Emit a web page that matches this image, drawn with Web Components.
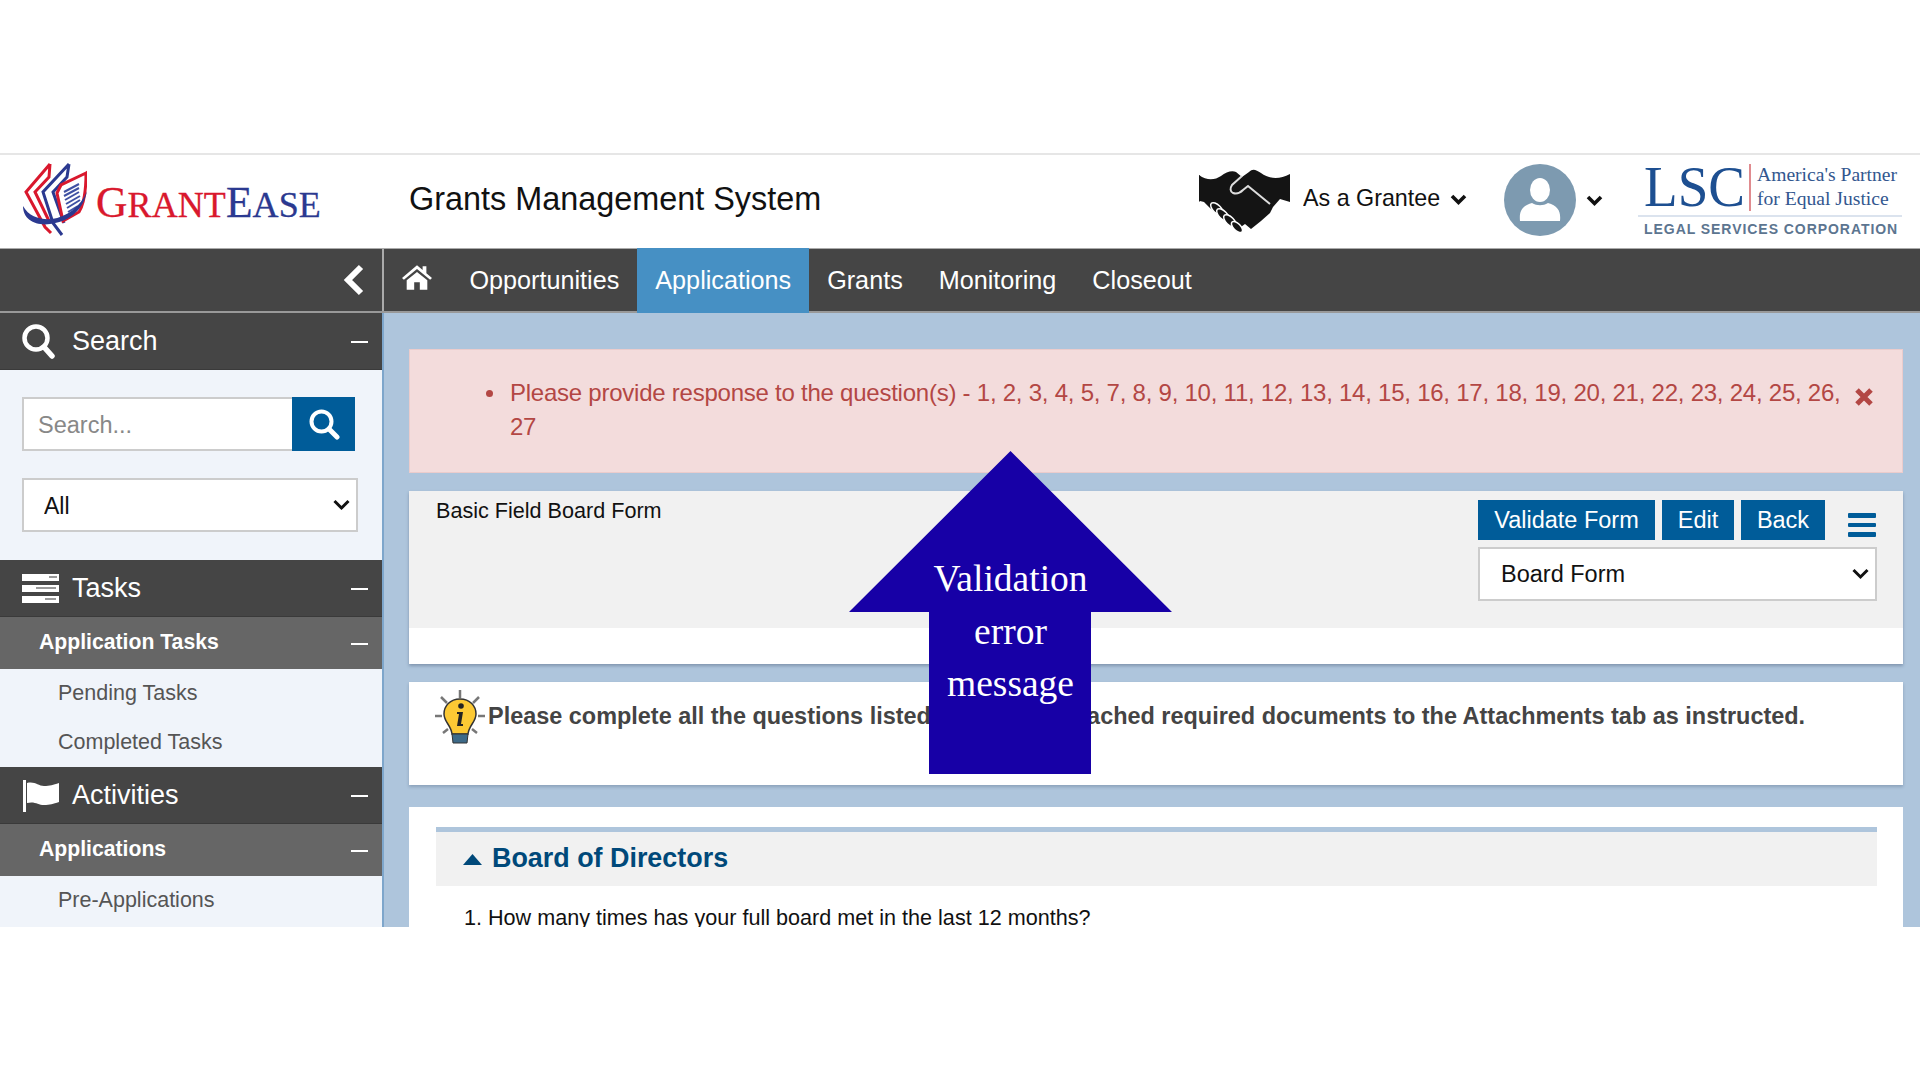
<!DOCTYPE html>
<html><head><meta charset="utf-8">
<style>
html,body{margin:0;padding:0;background:#fff;font-family:"Liberation Sans",Arial,sans-serif;}
body{width:1920px;height:1080px;overflow:hidden;position:relative;}
</style></head>
<body>
<ge-app></ge-app>
<script>
function el(name, css, html){
  customElements.define(name, class extends HTMLElement{
    constructor(){super();const s=this.attachShadow({mode:'open'});
      s.innerHTML='<style>'+css+'</style>'+html;}
  });
}
const chev='<svg width="17" height="12" viewBox="0 0 17 12"><path d="M2 2l6.500 6.500L15 2" fill="none" stroke="#111" stroke-width="3.600"/></svg>';

customElements.define('ge-select', class extends HTMLElement{
  constructor(){super();const s=this.attachShadow({mode:'open'});
    s.innerHTML=`<style>:host{display:block;position:relative;height:54px}
    select{appearance:none;-webkit-appearance:none;display:block;width:100%;height:54px;box-sizing:border-box;border:2px solid #ccc;background:#fff;font:var(--fs,23px) "Liberation Sans",sans-serif;padding-left:var(--pl,21px);padding-top:var(--pt,0);color:#111;border-radius:0;outline:0}
    svg{position:absolute;right:8px;top:21px;pointer-events:none}</style>
    <select><option></option></select><svg width="17" height="12" viewBox="0 0 17 12"><path d="M1.500 2l7 7 7-7" fill="none" stroke="#111" stroke-width="3"/></svg>`;}
  connectedCallback(){this.shadowRoot.querySelector('option').textContent=this.getAttribute('label');}
});

el('ge-grant-logo',`:host{display:flex;align-items:flex-start;width:320px;height:74px}
 svg{flex:none}
 .t{margin:17px 0 0 9px;font-family:"Liberation Serif",serif;white-space:nowrap;line-height:44px;font-size:36px;letter-spacing:.1px;-webkit-text-stroke:.3px currentColor}
 .r{color:#d9182d}.b{color:#2b3990}.big{font-size:43.500px}`,
`<svg width="65" height="74" viewBox="0 0 65 74">
 <path d="M28 1L4 29l19 35 6 6M28 1l-1 13-14 15 15 31" fill="none" stroke="#d9182d" stroke-width="3"/>
 <path d="M47 1L21 29l10 31 9 12M47 1l-2 13-14 15 11 31" fill="none" stroke="#2b3990" stroke-width="3"/>
 <path d="M64 10L39 22l-4 8 6 28 16-9c5-8 7-24 7-39z" fill="#fff" stroke="#d9182d" stroke-width="3"/>
 <path d="M42 29l15-8M42 33l15-8M43 37l14-8M44 41l14-8M45 45l13-8M46 49l10-6" stroke="#3f51a3" stroke-width="2"/>
 <path d="M1 43c0 14 13 20 27 18 17-2 33-12 37-33-6 16-21 26-35 28-11 1-23-2-29-13z" fill="#2b3990"/>
</svg><div class="t"><span class="r"><span class="big">G</span>RANT</span><span class="b"><span class="big">E</span>ASE</span></div>`);

el('ge-lsc-logo',`:host{display:block;width:264px;height:84px;font-family:"Liberation Serif",serif;color:#1d4f91}
 .top{display:flex;height:54px;border-bottom:2px solid #dbe3ee;padding-left:6px;box-sizing:border-box;align-items:flex-start}
 .lsc{font-size:58px;line-height:48px;width:105px;flex:none}
 .lsc span{display:inline-block;transform:scaleX(.95);transform-origin:left}
 .bar{width:2px;height:47px;background:#e08b8f;margin:1px 6px 0 0;flex:none}
 .tag{font-size:19.600px;line-height:24px;white-space:nowrap;color:#33578f}
 .sub{font:bold 14px/16px "Liberation Sans",sans-serif;letter-spacing:.95px;color:#5c7590;padding:4px 0 0 6px;white-space:nowrap}`,
`<div class="top"><div class="lsc"><span>LSC</span></div><div class="bar"></div><div class="tag">America's Partner<br>for Equal Justice</div></div><div class="sub">LEGAL SERVICES CORPORATION</div>`);

el('ge-header',`:host{display:flex;align-items:flex-start;height:95px;box-sizing:border-box;border-top:2px solid #e6e6e6;background:#fff;padding-left:22px;flex:none}
 ge-grant-logo{margin-top:8px}
 h1{font:400 32.400px "Liberation Sans",sans-serif;color:#111;margin:24px 0 0 67px;white-space:nowrap;line-height:40px;flex:none;width:790px}
 .hs{margin-top:14px;flex:none}
 .role{font-size:24px;color:#111;margin:24px 0 0 13px;line-height:38px;white-space:nowrap;transform:scaleX(.97);transform-origin:left;width:137px}
 .c1{margin:39px 0 0 10px;line-height:0}
 .av{width:72px;height:72px;border-radius:50%;background:#7d9ab0;margin:9px 0 0 37px;flex:none;display:flex;align-items:center;justify-content:center}
 .c2{margin:40px 0 0 10px;line-height:0}
 ge-lsc-logo{margin:8px 0 0 35px}`,
`<ge-grant-logo></ge-grant-logo><h1>Grants Management System</h1>
<svg class="hs" width="91" height="64" viewBox="0 0 91 64">
 <path d="M0 6C8 12 16 11 22 7 27 3 33 1 37 3l6 5 7-5c4-4 7-2 12 1 8 6 18 7 29 1v28L81 30l-7 8-3 6-9 8-10 8-6-5-7 5-8-5-9-7-11-9-6-6-4-1-9-1-2 2z" fill="#141414"/>
 <path d="M0 33V6" stroke="#141414" stroke-width="1"/>
 <g fill="#141414" stroke="#fff" stroke-width="1.500"><ellipse cx="18" cy="40" rx="8" ry="4" transform="rotate(45 18 40)"/><ellipse cx="24" cy="46" rx="8" ry="4" transform="rotate(45 24 46)"/><ellipse cx="31" cy="52" rx="8" ry="4" transform="rotate(45 31 52)"/><ellipse cx="38" cy="58" rx="7" ry="3.500" transform="rotate(45 38 58)"/></g>
 <path d="M43 7L33 16c-2 3-2 7 1 8 3 1 7 0 10-3l5-4 22 18" fill="none" stroke="#ddd" stroke-width="2"/>
</svg>
<div class="role">As a Grantee</div><div class="c1">${chev}</div>
<div class="av"><svg width="44" height="46" viewBox="0 0 44 46"><ellipse cx="22" cy="13" rx="10" ry="12" fill="#fff"/><path d="M2 44c-1-10 2-15 12-18 5 3 11 3 16 0 10 3 13 8 12 18z" fill="#fff"/></svg></div>
<div class="c2">${chev}</div><ge-lsc-logo></ge-lsc-logo>`);

el('ge-nav',`:host{display:flex;height:65px;background:#454545;box-sizing:border-box;border-top:1px solid #aaa;border-bottom:2px solid #999;flex:none}
 .tog{width:384px;flex:none;box-sizing:border-box;border-right:2px solid #aaa;display:flex;align-items:center;justify-content:flex-end;padding:0 17px 0 0}
 .home{width:67.500px;flex:none;display:flex;align-items:center;box-sizing:border-box;padding:0 0 6px 18px}
 a{color:#fff;font-size:25.200px;padding:0 18px;display:flex;align-items:center;white-space:nowrap;flex:none}
 a.on{background:#4690c4;height:65px;margin:-1px 0 -2px}`,
`<div class="tog"><svg width="22" height="32" viewBox="0 0 22 32"><path d="M18 3L5 16l13 13" fill="none" stroke="#fff" stroke-width="6"/></svg></div>
<div class="home"><svg width="30" height="25" viewBox="0 0 32 26"><path d="M16 0L0 13.500l2 2L16 4l14 11.500 2-2-6-5V1h-4v4z M5 16v10h8v-8h6v8h8V16L16 7z" fill="#fff"/></svg></div>
<a>Opportunities</a><a class="on">Applications</a><a>Grants</a><a>Monitoring</a><a>Closeout</a>`);

el('ge-side-head',`:host{display:flex;align-items:center;height:57px;background:#454545;color:#fff;font-size:27px;box-sizing:border-box;padding:0 14px 0 21px;border-bottom:1px solid #3a3a3a}
 .i{width:51px;display:flex;align-items:center;flex:none}
 .t{flex:1}.m{width:17px;height:2px;background:#fff;margin-top:2px}`,
`<div class="i"><slot name="icon"></slot></div><div class="t"><slot></slot></div><div class="m"></div>`);

el('ge-side-sub',`:host{display:flex;align-items:center;height:52px;background:#666;color:#fff;font-size:21.200px;font-weight:bold;box-sizing:border-box;padding:0 14px 2px 39px}
 .t{flex:1}.m{width:17px;height:2px;background:#fff;margin-top:4px}`,
`<div class="t"><slot></slot></div><div class="m"></div>`);

el('ge-side-link',`:host{display:block;height:49px;line-height:49px;padding-left:58px;font-size:21.500px;color:#555}`,`<slot></slot>`);

el('ge-search',`:host{display:block;padding:27px 24px 28px 22px;background:#f0f4fa}
 .row{display:flex;height:54px}
 input{width:270px;height:54px;box-sizing:border-box;border:2px solid #ccc;border-right:0;padding:2px 14px 0;font:23.500px "Liberation Sans",sans-serif;background:#fff;outline:0}
 input::placeholder{color:#888}
 button{width:63px;height:54px;border:0;background:#005c99;display:flex;align-items:center;justify-content:center;padding:0}
 ge-select{margin-top:27px;--fs:23px;--pl:20px;--pt:2px}`,
`<div class="row"><input placeholder="Search..."><button aria-label="Search"><svg width="32" height="32" viewBox="0 0 32 32"><circle cx="13.500" cy="13.500" r="10" fill="none" stroke="#fff" stroke-width="4"/><path d="M21 21l8 8" stroke="#fff" stroke-width="5" stroke-linecap="round"/></svg></button></div>
<ge-select label="All"></ge-select>`);

el('ge-sidebar',`:host{display:block;width:382px;flex:none;background:#f0f4fa;height:100%;overflow:hidden}`,
`<ge-side-head><svg slot="icon" width="36" height="36" viewBox="0 0 36 36"><circle cx="15" cy="15" r="11.500" fill="none" stroke="#fff" stroke-width="4.500"/><path d="M23 24l8 9" stroke="#fff" stroke-width="5.500" stroke-linecap="round"/></svg>Search</ge-side-head>
<ge-search></ge-search>
<ge-side-head><svg slot="icon" style="margin-left:1px" width="37" height="29" viewBox="0 0 37 29"><path d="M0 0h37v7H0zM0 11h37v7H0zM0 22h37v7H0z" fill="#fff"/><path d="M27 3h8M14 14h20M23 25h11" stroke="#999" stroke-width="2"/></svg>Tasks</ge-side-head>
<ge-side-sub>Application Tasks</ge-side-sub>
<ge-side-link>Pending Tasks</ge-side-link><ge-side-link>Completed Tasks</ge-side-link>
<ge-side-head><svg slot="icon" style="margin-left:1px" width="37" height="33" viewBox="0 0 37 33"><path d="M1 1h3v32H1z" fill="#fff"/><path d="M5 4c8-2 11 3 17 3 6 0 9-1 15-3v19c-6 2-9 3-15 3-6 0-9-4-17-2z" fill="#fff"/></svg>Activities</ge-side-head>
<ge-side-sub>Applications</ge-side-sub>
<ge-side-link>Pre-Applications</ge-side-link>`);

el('ge-alert',`:host{display:flex;height:124px;background:#f3dcdc;border:1px solid #ebcccc;box-sizing:border-box;color:#b34744;font-size:24px;line-height:34px;padding:26px 0 0 76px;flex:none}
 .dot{width:7px;height:7px;border-radius:50%;background:#b34744;margin:14px 17px 0 0;flex:none}
 .msg{width:1335px;flex:none;letter-spacing:-.01em}
 svg{margin:11px 0 0 9px;flex:none}`,
`<div class="dot"></div><div class="msg">Please provide response to the question(s) - 1, 2, 3, 4, 5, 7, 8, 9, 10, 11, 12, 13, 14, 15, 16, 17, 18, 19, 20, 21, 22, 23, 24, 25, 26, 27</div>
<svg width="20" height="20" viewBox="0 0 20 20"><path d="M3 3l14 14M17 3L3 17" stroke="#b34744" stroke-width="5"/></svg>`);

el('ge-btn',`:host{display:flex;align-items:center;justify-content:center;height:40px;background:#005c99;color:#fff;font-size:23.500px;box-sizing:border-box;white-space:nowrap}`,`<slot></slot>`);

el('ge-form-panel',`:host{display:block;background:#fff;height:173px;box-shadow:0 2px 3px rgba(60,80,110,.4);flex:none;margin-top:18px}
 .g{background:#f1f1f1;height:137px;display:flex;justify-content:space-between;padding:9px 26px 0 27px;box-sizing:border-box}
 .n{font-size:21.600px;color:#111;line-height:22px;white-space:nowrap}
 .r{width:399px;flex:none}
 .b{display:flex;align-items:flex-start}
 .b ge-btn{margin-right:7px}
 .h{margin:13px 0 0 23px;width:28px}
 .h i{display:block;height:4.500px;background:#005c99;margin-bottom:5px;border-radius:1px}
 ge-select{margin-top:5px;--fs:23.500px;--pl:21px}`,
`<div class="g"><div class="n">Basic Field Board Form</div><div class="r"><div class="b"><ge-btn style="width:177px">Validate Form</ge-btn><ge-btn style="width:72px">Edit</ge-btn><ge-btn style="width:84px;margin:0">Back</ge-btn><div class="h"><i></i><i></i><i></i></div></div><ge-select label="Board Form"></ge-select></div></div>`);

el('ge-info',`:host{display:flex;height:103px;background:#fff;flex:none;margin-top:18px;box-shadow:0 2px 3px rgba(60,80,110,.3);box-sizing:border-box;padding:8px 0 0 26px}
 svg{flex:none}
 .t{font-size:23.450px;font-weight:bold;color:#444;line-height:30px;white-space:nowrap;margin:11px 0 0 3px}`,
`<svg width="50" height="55" viewBox="0 0 50 55"><g stroke="#777" stroke-width="2.500"><path d="M25 0v8M6 7l6 6M44 7l-6 6M0 26h7M43 26h7M8 43l5-4M42 43l-5-4"/></g>
<path d="M25 9c-10 0-16 7-16 15 0 8 7 11 8 20h16c1-9 8-12 8-20 0-8-6-15-16-15z" fill="#fcc934" stroke="#333" stroke-width="1.500"/>
<path d="M17 44h16l-1 9H18z" fill="#3d6a88" stroke="#333"/><circle cx="26" cy="16" r="2.800" fill="#222"/><path d="M22 22h6l-2 12h2v2h-6l2-12h-2z" fill="#222"/></svg>
<div class="t">Please complete all the questions listed below and attached required documents to the Attachments tab as instructed.</div>`);

el('ge-section',`:host{display:block;background:#fff;flex:none;margin-top:22px;padding:20px 26px 0 27px;height:300px;box-sizing:border-box}
 .h{height:52px;padding-bottom:2px;background:#f1f1f1;border-top:5px solid #aec5dc;display:flex;align-items:center;padding-left:27px;color:#00497a;font-size:26.900px;font-weight:bold;white-space:nowrap}
 svg{margin:2px 10px 0 0}
 .q{font-size:21.600px;color:#111;padding:19px 0 0 28px;line-height:26px;white-space:nowrap}`,
`<div class="h"><svg width="19" height="11" viewBox="0 0 19 11"><path d="M9.500 0L19 11H0z" fill="#00497a"/></svg>Board of Directors</div><div class="q">1. How many times has your full board met in the last 12 months?</div>`);

el('ge-arrow',`:host{position:absolute;left:849px;top:451px;width:323px;height:323px;display:block;z-index:5}
 svg{position:absolute;inset:0}
 .t{position:absolute;left:0;right:0;top:102px;text-align:center;font:37.500px/52.500px "Liberation Serif",serif;color:#fff}`,
`<svg width="323" height="323" viewBox="0 0 323 323"><path d="M161.500 0L323 161H242V323H80V161H0z" fill="#1700a6"/></svg><div class="t">Validation<br>error<br>message</div>`);

el('ge-app',`:host{display:flex;flex-direction:column;margin-top:153px;height:774px;overflow:hidden;background:#fff}
 .b{display:flex;flex:1;min-height:0;overflow:hidden}
 .m{flex:1;background:#aec5dc;padding:36px 17px 0 25px;border-left:2px solid #7ea6cb;display:flex;flex-direction:column;overflow:hidden;min-width:0}`,
`<ge-header></ge-header><ge-nav></ge-nav><div class="b"><ge-sidebar></ge-sidebar><div class="m"><ge-alert></ge-alert><ge-form-panel></ge-form-panel><ge-info></ge-info><ge-section></ge-section></div></div>`);

document.body.appendChild(document.createElement('ge-arrow'));
</script>
</body></html>
